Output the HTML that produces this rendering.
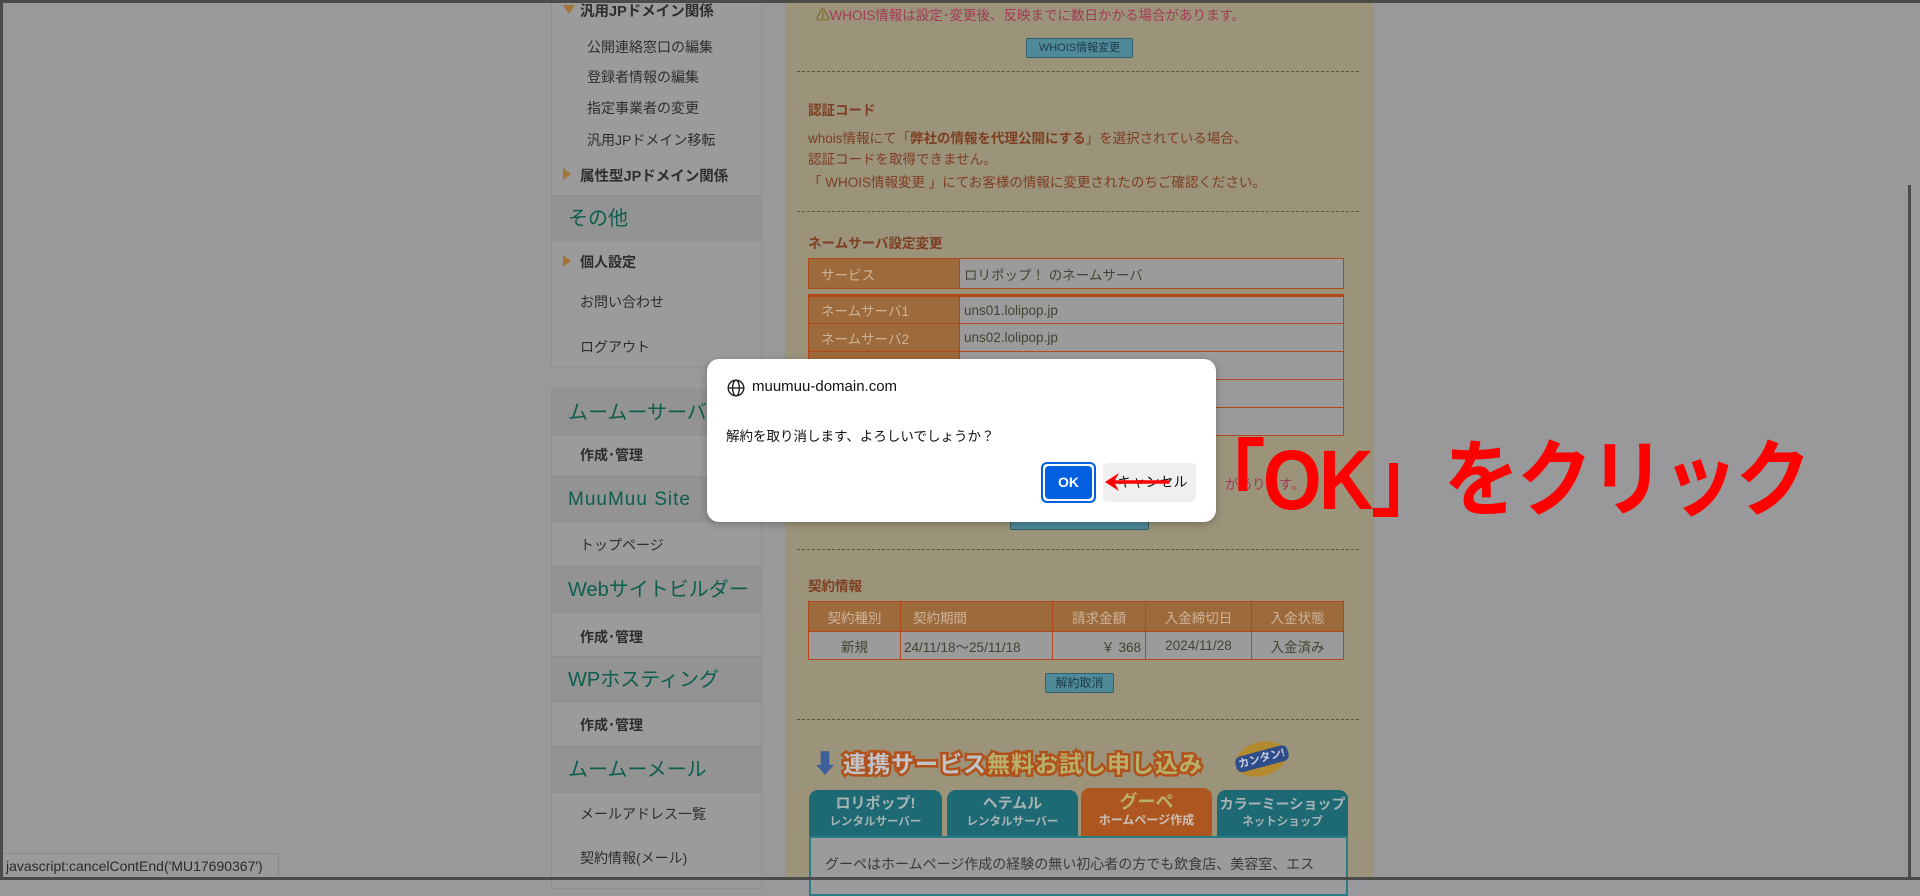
<!DOCTYPE html>
<html><head><meta charset="utf-8">
<style>
*{margin:0;padding:0;box-sizing:border-box}
body{width:1920px;height:880px;overflow:hidden;background:#99999b;position:relative;font-family:"Liberation Sans","Noto Sans CJK JP",sans-serif;color:#333}
.a{position:absolute;white-space:nowrap}
.frame{position:absolute;left:0;top:0;width:1920px;height:880px;border:3px solid #4b4b4b;border-right:none;pointer-events:none}
.sb{position:absolute;left:551px;width:211px;background:#9b9b9b;border:1px solid #8f8f8f}
.si{position:absolute;left:0;width:209px;font-size:14px;color:#2e2e2e}
.hd{position:absolute;left:0;width:209px;background:#939393;color:#0d5e4e;font-size:20px;padding-left:16px}
.ln{position:absolute;left:0;width:209px;height:1px;background:#8c8c8c}
.tri{position:absolute;left:11px;width:0;height:0}
.content{position:absolute;left:785px;top:0;width:589px;height:880px;background:#9b937a}
.br{color:#7e3e22;font-size:13.5px}
.dash{position:absolute;left:12px;width:562px;border-top:1.5px dashed #5a5245}
table{border-collapse:collapse;position:absolute}
td{border:1.5px solid #b0481a;font-size:13.5px;height:28px;color:#5a3a2a}
td.h{background:#9d6a3c;color:#cdb49a;padding-left:12px}
td.v{background:#9c9a9a;padding-left:4px;color:#443}
.btn{position:absolute;background:#4e8a99;border:1px solid #355f6a;color:#1e3a46;font-size:11px;text-align:center;border-radius:2px}
.tab{position:absolute;top:790px;height:46px;border-radius:9px 9px 0 0;background:#1e6a74;color:#a8b3b3;font-weight:bold;text-align:center;font-size:15px;line-height:18px;padding-top:5px}
.tab small{font-size:11.5px;display:block}
</style></head><body>

<div class="sb" style="top:-2px;height:369px">
 <div class="tri" style="top:6px;border-left:6px solid transparent;border-right:6px solid transparent;border-top:9px solid #a3743a"></div>
 <div class="si a" style="left:28px;top:1px;font-weight:bold;font-size:14.5px;width:auto">汎用JPドメイン関係</div>
 <div class="si a" style="left:35px;top:38px;width:auto">公開連絡窓口の編集</div>
 <div class="si a" style="left:35px;top:68px;width:auto">登録者情報の編集</div>
 <div class="si a" style="left:35px;top:99px;width:auto">指定事業者の変更</div>
 <div class="si a" style="left:35px;top:131px;width:auto">汎用JPドメイン移転</div>
 <div class="tri" style="top:169px;border-top:6px solid transparent;border-bottom:6px solid transparent;border-left:8px solid #a3743a"></div>
 <div class="si a" style="left:28px;top:166px;font-weight:bold;font-size:14.5px;width:auto">属性型JPドメイン関係</div>
 <div class="ln" style="top:196px"></div>
 <div class="hd" style="top:197px;height:46px;line-height:46px">その他</div>
 <div class="tri" style="top:256px;border-top:6px solid transparent;border-bottom:6px solid transparent;border-left:8px solid #a3743a"></div>
 <div class="si a" style="left:28px;top:253px;font-weight:bold;width:auto">個人設定</div>
 <div class="ln" style="top:282px;background:#979797"></div>
 <div class="si a" style="left:28px;top:293px;width:auto">お問い合わせ</div>
 <div class="ln" style="top:325px;background:#979797"></div>
 <div class="si a" style="left:28px;top:338px;width:auto">ログアウト</div>
</div>

<div class="sb" style="top:389px;height:500px">
 <div class="hd" style="top:0;height:46px;line-height:46px">ムームーサーバー</div>
 <div class="si a" style="left:28px;top:55px;font-weight:bold;width:auto">作成･管理</div>
 <div class="ln" style="top:86px"></div>
 <div class="hd" style="top:87px;height:46px;line-height:46px;letter-spacing:1px;font-size:19px">MuuMuu Site</div>
 <div class="si a" style="left:28px;top:145px;width:auto">トップページ</div>
 <div class="ln" style="top:176px"></div>
 <div class="hd" style="top:177px;height:46px;line-height:46px">Webサイトビルダー</div>
 <div class="si a" style="left:28px;top:237px;font-weight:bold;width:auto">作成･管理</div>
 <div class="ln" style="top:266px"></div>
 <div class="hd" style="top:267px;height:46px;line-height:46px">WPホスティング</div>
 <div class="si a" style="left:28px;top:325px;font-weight:bold;width:auto">作成･管理</div>
 <div class="ln" style="top:356px"></div>
 <div class="hd" style="top:357px;height:46px;line-height:46px">ムームーメール</div>
 <div class="si a" style="left:28px;top:414px;width:auto">メールアドレス一覧</div>
 <div class="ln" style="top:446px;background:#979797"></div>
 <div class="si a" style="left:28px;top:458px;width:auto">契約情報(メール)</div>
</div>

<div class="content">
 <div class="a" style="left:31px;top:4px;font-size:13.5px;color:#a33a55"><span style="color:#6a5a10">⚠</span>WHOIS情報は設定･変更後、反映までに数日かかる場合があります。</div>
 <div class="btn" style="left:241px;top:38px;width:107px;height:20px;line-height:18px">WHOIS情報変更</div>
 <div class="dash" style="top:71px"></div>
 <div class="a br" style="left:23px;top:99px;font-weight:bold">認証コード</div>
 <div class="a br" style="left:23px;top:127px">whois情報にて「<b>弊社の情報を代理公開にする</b>」を選択されている場合、</div>
 <div class="a br" style="left:23px;top:148px">認証コードを取得できません。</div>
 <div class="a br" style="left:23px;top:171px">「 WHOIS情報変更 」にてお客様の情報に変更されたのちご確認ください。</div>
 <div class="dash" style="top:211px"></div>
 <div class="a br" style="left:23px;top:232px;font-weight:bold">ネームサーバ設定変更</div>
 <table style="left:23px;top:258px;width:536px"><tr><td class="h" style="width:151px;height:30px">サービス</td><td class="v">ロリポップ！ のネームサーバ</td></tr></table>
 <table style="left:23px;top:294px;width:536px;border-top:3px solid #b0481a">
  <tr><td class="h" style="width:151px">ネームサーバ1</td><td class="v">uns01.lolipop.jp</td></tr>
  <tr><td class="h">ネームサーバ2</td><td class="v">uns02.lolipop.jp</td></tr>
  <tr><td class="h">&nbsp;</td><td class="v"></td></tr>
  <tr><td class="h">&nbsp;</td><td class="v"></td></tr>
  <tr><td class="h">&nbsp;</td><td class="v"></td></tr>
 </table>
 <div class="a" style="left:440px;top:473px;font-size:13.5px;color:#a33a55">があります。</div>
 <div class="btn" style="left:225px;top:512px;width:139px;height:18px"></div>
 <div class="dash" style="top:549px"></div>
 <div class="a br" style="left:23px;top:575px;font-weight:bold">契約情報</div>
 <table style="left:23px;top:601px;width:536px">
  <tr><td class="h" style="width:92px;text-align:center;padding:0;height:30px">契約種別</td><td class="h" style="width:152px">契約期間</td><td class="h" style="width:93px;text-align:center;padding:0">請求金額</td><td class="h" style="width:106px;text-align:center;padding:0">入金締切日</td><td class="h" style="text-align:center;padding:0">入金状態</td></tr>
  <tr><td class="v" style="text-align:center;padding:0">新規</td><td class="v" style="padding-left:3px">24/11/18～25/11/18</td><td class="v" style="text-align:right;padding-right:4px">￥ 368</td><td class="v" style="text-align:center;padding:0">2024/11/28</td><td class="v" style="text-align:center;padding:0">入金済み</td></tr>
 </table>
 <div class="btn" style="left:260px;top:673px;width:69px;height:20px;line-height:18px;font-size:12px">解約取消</div>
 <div class="dash" style="top:719px"></div>
 <div class="a" style="left:27px;top:744px;font-size:26px;color:#3d5f9a">⬇</div>
 <div class="a" style="left:58px;top:745px;font-size:23px;font-weight:bold;color:#c0c4c8;-webkit-text-stroke:5px #b1521c;paint-order:stroke fill;letter-spacing:1px">連携サービス<span style="color:#b8b06a">無料お試し申し込み</span></div>
 <div class="a" style="left:450px;top:742px;width:52px;height:34px;border-radius:50%;background:#b38a2e;color:#c8cede;font-size:11px;font-weight:bold;text-align:center;line-height:34px;transform:rotate(-15deg)"><span style="background:#2e4d8a;padding:2px 3px;border-radius:6px">カンタン!</span></div>
 <div class="tab" style="left:24px;width:133px">ロリポップ!<small>レンタルサーバー</small></div>
 <div class="tab" style="left:162px;width:131px">ヘテムル<small>レンタルサーバー</small></div>
 <div class="tab" style="left:296px;width:131px;top:788px;background:#ae561f;color:#b8b06a;font-size:18px;height:48px">グーペ<small style="color:#c8c0b8;font-size:12px">ホームページ作成</small></div>
 <div class="tab" style="left:432px;width:131px;font-size:14px">カラーミーショップ<small>ネットショップ</small></div>
 <div class="a" style="left:24px;top:836px;width:539px;height:60px;background:#9b9b9b;border:2px solid #2a7c84;font-size:14px;padding:16px 0 0 14px;color:#3a3a3a">グーペはホームページ作成の経験の無い初心者の方でも飲食店、美容室、エス</div>
</div>

<div class="a" style="left:707px;top:359px;width:509px;height:163px;background:#fff;border-radius:12px;box-shadow:0 2px 8px rgba(0,0,0,.25)">
 <svg class="a" style="left:20px;top:20px" width="18" height="18" viewBox="0 0 18 18" fill="none" stroke="#222" stroke-width="1.4"><circle cx="9" cy="9" r="7.8"/><ellipse cx="9" cy="9" rx="3.4" ry="7.8"/><line x1="1.2" y1="9" x2="16.8" y2="9"/></svg>
 <div class="a" style="left:45px;top:19px;font-size:15px;color:#111">muumuu-domain.com</div>
 <div class="a" style="left:19px;top:66px;font-size:13.5px;color:#111">解約を取り消します、よろしいでしょうか？</div>
 <div class="a" style="left:334px;top:103px;width:55px;height:41px;border:2px solid #0060df;border-radius:6px;padding:2px"><div style="width:100%;height:100%;background:#0060df;border-radius:4px;color:#fff;font-weight:bold;font-size:14px;text-align:center;line-height:33px">OK</div></div>
 <div class="a" style="left:396px;top:104px;width:93px;height:39px;background:#efefef;border-radius:5px;font-size:14px;color:#111;text-align:center;line-height:39px;padding-left:6px">キャンセル</div>
 <svg class="a" style="left:396px;top:112px" width="70" height="22" viewBox="0 0 70 22"><line x1="8" y1="11" x2="66" y2="11" stroke="#f00" stroke-width="3.5"/><path d="M2 11 L16 2 L11 11 L16 20 Z" fill="#f00"/></svg>
</div>

<div class="a" style="left:1190px;top:432px;font-size:84px;font-weight:bold;color:#ff0000;line-height:96px;letter-spacing:-3px;transform:scaleX(0.9);transform-origin:left top">「OK」をクリック</div>

<div class="a" style="left:0;top:853px;width:279px;height:25px;background:#9a9a9a;border:1px solid #888;font-size:14px;color:#2a2a2a;padding:4px 0 0 5px">javascript:cancelContEnd('MU17690367')</div>

<div class="a" style="left:1908px;top:185px;width:3px;height:695px;background:#4b4b4b"></div>
<div class="frame"></div>
<div class="a" style="left:0;top:877px;width:1920px;height:3px;background:#4b4b4b"></div>
</body></html>
